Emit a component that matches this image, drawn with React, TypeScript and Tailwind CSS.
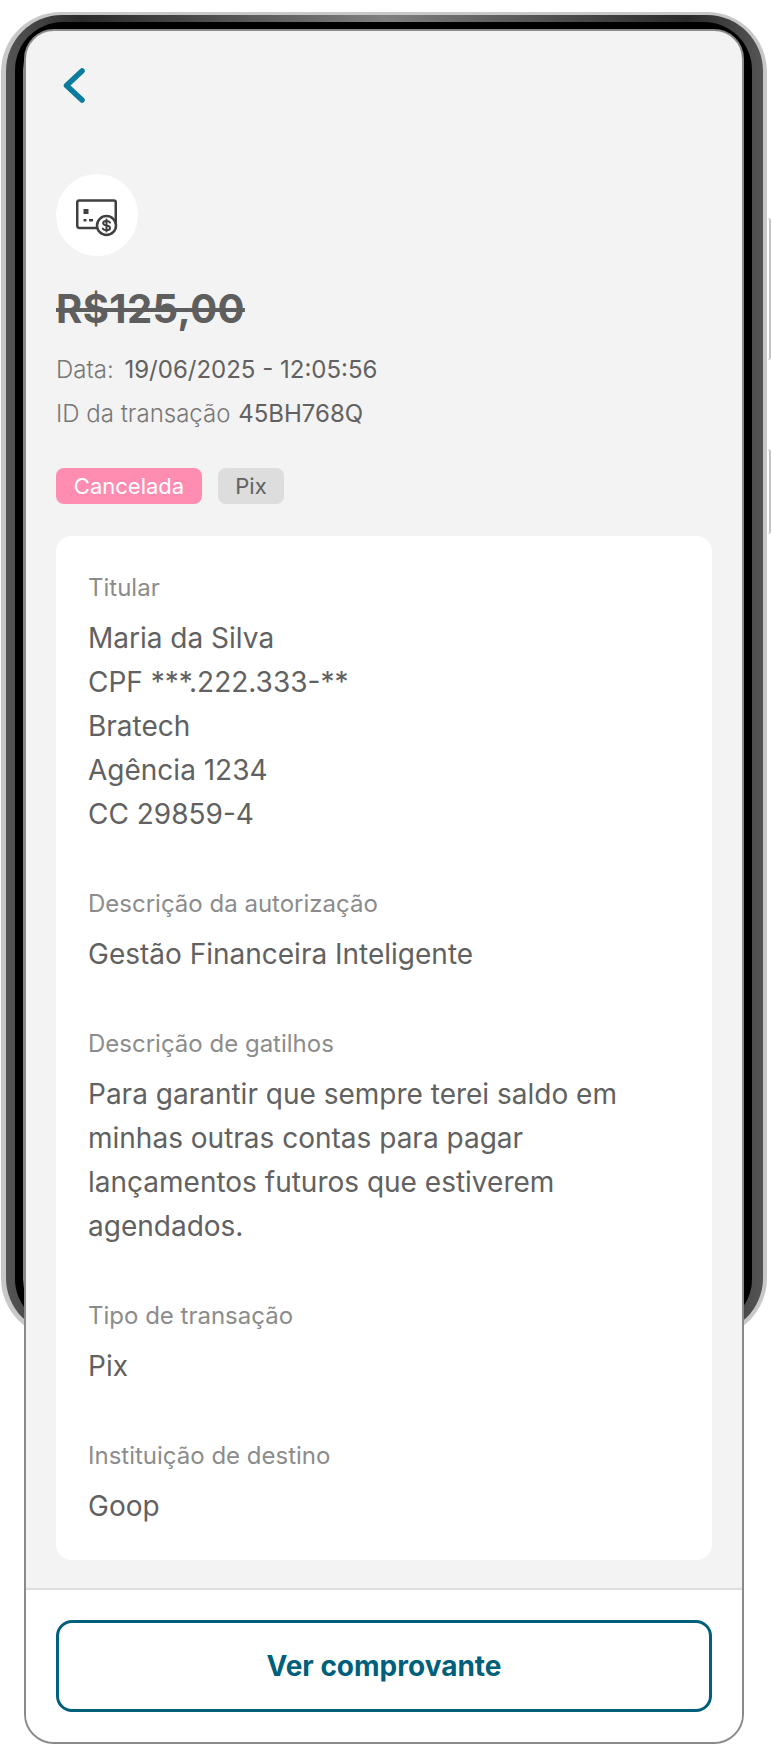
import React from 'react';

const titular = ['Maria da Silva', 'CPF ***.222.333-**', 'Bratech', 'Agência 1234', 'CC 29859-4'];
const gatilhos = [
  'Para garantir que sempre terei saldo em',
  'minhas outras contas para pagar',
  'lançamentos futuros que estiverem',
  'agendados.',
];

const Label = ({ children }: { children: React.ReactNode }) => (
  <p className="text-[24px] leading-[44px] text-[#8c8c8c]">{children}</p>
);

const Value = ({ lines }: { lines: string[] }) => (
  <div className="mt-[6px] text-[28px] leading-[44px] text-[#616161]">
    {lines.map((line) => (
      <p key={line}>{line}</p>
    ))}
  </div>
);

const CardIcon = () => (
  <svg width="44" height="44" viewBox="0 0 44 44" fill="none">
    <rect x="2.250" y="7.500" width="38.500" height="27.500" rx="2" stroke="#404040" stroke-width="2.500" />
    <rect x="8.500" y="16" width="5" height="5" fill="#404040" />
    <rect x="8.500" y="26" width="3" height="2.500" fill="#404040" />
    <rect x="14" y="26" width="4" height="2.500" fill="#404040" />
    <circle cx="31.500" cy="32.500" r="9.500" fill="#ffffff" stroke="#404040" stroke-width="2.500" />
    <path
      d="M35 29.600c-.6-1-1.800-1.600-3.500-1.600-2 0-3.300 1-3.300 2.300 0 3.100 6.800 1.500 6.800 4.600 0 1.400-1.400 2.300-3.500 2.300-1.700 0-3-.6-3.700-1.600M31.500 26.500v12"
      stroke="#404040"
      stroke-width="2"
      stroke-linecap="round"
    />
  </svg>
);

export default function App() {
  return (
    <div className="relative h-[1744px] w-[772px] overflow-hidden bg-white font-['Inter',sans-serif]">
      {/* phone frame behind the screen */}
      <div className="absolute left-[1px] top-[12px] h-[1326px] w-[766px] rounded-[60px] bg-[#c8c8c8] pb-[4px] pl-[5px] pr-[4px] pt-[3px]">
        <div className="h-full w-full rounded-[56px] bg-[linear-gradient(90deg,#555555_0%,#2a2a2a_10%,#808080_50%,#2a2a2a_90%,#555555_100%)] pb-[7px] pl-[9px] pr-[11px] pt-[7px]">
          <div className="h-full w-full rounded-[48px] bg-black p-[8px]">
            <div className="h-full w-full rounded-[40px] bg-[#8a8a8a]" />
          </div>
        </div>
      </div>
      <div className="absolute left-[767px] top-[218px] h-[142px] w-[4px] rounded-r-[3px] border-r-2 border-[#c4c4c4]" />
      <div className="absolute left-[767px] top-[449px] h-[85px] w-[4px] rounded-r-[3px] border-r-2 border-[#c4c4c4]" />

      <div className="relative ml-[24px] mt-[29px] flex h-[1715px] w-[720px] flex-col overflow-hidden rounded-[30px] border-2 border-[#8a8a8a] bg-[#f3f3f3]">
        <div className="flex-1 px-[30px]">
          <svg className="ml-[6px] mt-[37px]" width="26" height="40" viewBox="0 0 26 40" fill="none">
            <path d="M20 3L4.500 17.500L20 32" stroke="#0a7c9e" stroke-width="5.500" stroke-linecap="round" stroke-linejoin="round" />
          </svg>

          <div className="mt-[66px] flex h-[82px] w-[82px] items-center justify-center rounded-full bg-white">
            <CardIcon />
          </div>

          <p className="mt-[31px] text-[40px] font-bold leading-[44px] tracking-[0.4px] text-[#5e5e5e] line-through">R$125,00</p>

          <p className="mt-[17px] text-[24px] leading-[44px] font-light text-[#777777]">
            Data: <span className="ml-[4px] font-normal text-[#616161]">19/06/2025 - 12:05:56</span>
          </p>
          <p className="text-[24px] leading-[44px] font-light text-[#777777]">
            ID da transação <span className="ml-[1px] font-normal text-[#616161]">45BH768Q</span>
          </p>

          <div className="mt-[32px] flex gap-[16px]">
            <span className="flex h-[36px] w-[146px] items-center justify-center rounded-[8px] bg-[#ff8db2] text-[22px] text-white">
              Cancelada
            </span>
            <span className="flex h-[36px] w-[66px] items-center justify-center rounded-[8px] bg-[#dddddd] text-[22px] text-[#616161]">
              Pix
            </span>
          </div>

          <div className="mt-[32px] rounded-[16px] bg-white px-[32px] pb-[32px] pt-[30px]">
            <Label>Titular</Label>
            <Value lines={titular} />
            <div className="mt-[46px]">
              <Label>Descrição da autorização</Label>
              <Value lines={['Gestão Financeira Inteligente']} />
            </div>
            <div className="mt-[46px]">
              <Label>Descrição de gatilhos</Label>
              <Value lines={gatilhos} />
            </div>
            <div className="mt-[46px]">
              <Label>Tipo de transação</Label>
              <Value lines={['Pix']} />
            </div>
            <div className="mt-[46px]">
              <Label>Instituição de destino</Label>
              <Value lines={['Goop']} />
            </div>
          </div>
        </div>

        <div className="h-[154px] border-t-2 border-[#dddddd] bg-white px-[30px] pt-[30px]">
          <button className="flex h-[92px] w-full items-center justify-center rounded-[16px] border-[3px] border-[#005f7b] text-[28px] font-bold text-[#005f7b]">
            Ver comprovante
          </button>
        </div>
      </div>
    </div>
  );
}
